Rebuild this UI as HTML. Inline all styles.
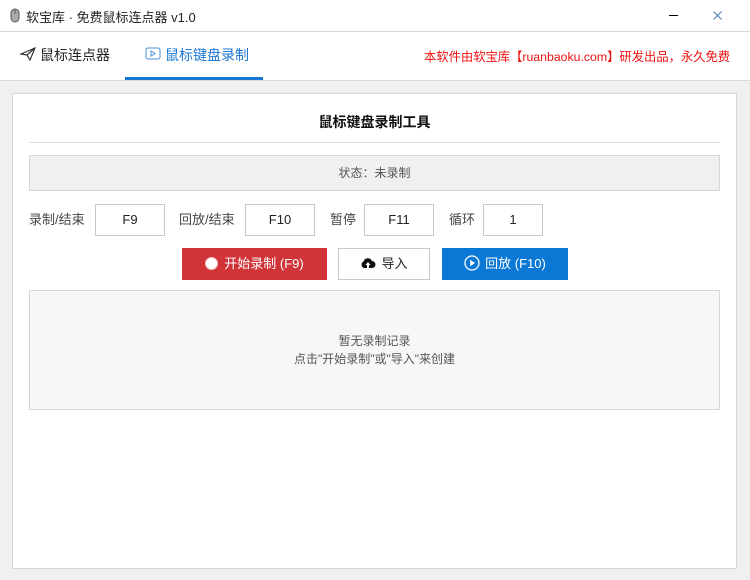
<!DOCTYPE html>
<html><head><meta charset="utf-8"><style>
*{box-sizing:border-box;margin:0;padding:0}
body{width:750px;height:580px;background:#f0f0f0;font-family:"Liberation Sans","Noto Sans CJK SC",sans-serif;font-size:13px;color:#333;position:relative;overflow:hidden}
.abs{position:absolute}
.top{left:0;top:0;width:750px;height:81px;background:#fff;border-bottom:1px solid #d8d8d8}
.tl{left:0;top:31px;width:750px;height:1px;background:#d8d8d8}
.panel{left:12px;top:93px;width:725px;height:476px;background:#fff;border:1px solid #d6d6d6}
.inp{height:32px;border:1px solid #c8c8c8;background:#fff;text-align:center;line-height:30px;font-size:13px;color:#222}
.lbl{font-size:13px;color:#444;line-height:32px;top:204px}
.btn{top:248px;height:32px;line-height:32px;text-align:center;font-size:13px}
</style></head><body>
<div class="abs top"></div>
<div class="abs tl"></div>
<svg class="abs" style="left:10px;top:8px" width="10" height="15"><rect x="1" y="1" width="8" height="13" rx="4" fill="#aaa" stroke="#555"/><line x1="5" y1="2" x2="5" y2="6" stroke="#555"/></svg>
<div class="abs" style="left:26px;top:7px;font-size:13px;color:#222">软宝库 · 免费鼠标连点器 v1.0</div>
<div class="abs" style="left:669px;top:15px;width:9px;height:1px;background:#000"></div>
<svg class="abs" style="left:713px;top:11px" width="9" height="9" viewBox="0 0 9 9"><path d="M0.5 0.5 L8.5 8.5 M8.5 0.5 L0.5 8.5" stroke="#4a7bb0" stroke-width="1"/></svg>
<svg class="abs" style="left:20px;top:47px" width="16" height="14" viewBox="0 0 16 14"><path d="M1 7 L15 1 L10 13 L7 8 Z M7 8 L15 1" fill="none" stroke="#333" stroke-width="1.2"/></svg>
<div class="abs" style="left:40px;top:45px;font-size:14px;color:#222">鼠标连点器</div>
<svg class="abs" style="left:145px;top:47px" width="16" height="13" viewBox="0 0 16 13"><rect x="1" y="1" width="14" height="11" rx="2" fill="none" stroke="#4a90d9"/><path d="M6 4 L10 6.5 L6 9Z" fill="none" stroke="#4a90d9"/></svg>
<div class="abs" style="left:165px;top:45px;font-size:14px;color:#1e78d2">鼠标键盘录制</div>
<div class="abs" style="left:125px;top:77px;width:138px;height:3px;background:#1677d2"></div>
<div class="abs" style="left:424px;top:47px;font-size:12.3px;color:#f01010;white-space:nowrap">本软件由软宝库【ruanbaoku.com】研发出品，永久免费</div>
<div class="abs panel"></div>
<div class="abs" style="left:29px;top:112px;width:691px;text-align:center;font-size:14px;font-weight:bold;color:#111">鼠标键盘录制工具</div>
<div class="abs" style="left:29px;top:142px;width:691px;height:1px;background:#ddd"></div>
<div class="abs" style="left:29px;top:155px;width:691px;height:36px;background:#f0f0f0;border:1px solid #d6d6d6;text-align:center;line-height:34px;font-size:12px;color:#555">状态：未录制</div>
<div class="abs lbl" style="left:29px">录制/结束</div>
<div class="abs inp" style="left:95px;top:204px;width:70px">F9</div>
<div class="abs lbl" style="left:179px">回放/结束</div>
<div class="abs inp" style="left:245px;top:204px;width:70px">F10</div>
<div class="abs lbl" style="left:330px">暂停</div>
<div class="abs inp" style="left:364px;top:204px;width:70px">F11</div>
<div class="abs lbl" style="left:449px">循环</div>
<div class="abs inp" style="left:483px;top:204px;width:60px">1</div>
<div class="abs btn" style="left:182px;width:145px;background:#d13438;color:#fff"><span style="display:inline-block;width:13px;height:13px;border-radius:50%;background:#fff;border:1px solid #f5c0c0;vertical-align:-2px;margin-right:6px"></span>开始录制 (F9)</div>
<div class="abs btn" style="left:338px;width:92px;background:#fff;border:1px solid #c8c8c8;color:#222;line-height:30px"><svg width="16" height="12" viewBox="0 0 16 12" style="vertical-align:-1px;margin-right:5px"><path d="M4 11 A3.5 3.5 0 0 1 3.5 4.5 A4.5 4.5 0 0 1 12 4 A3.5 3.5 0 0 1 12 11 Z" fill="#111"/><path d="M8 5 L5.5 8 H7 V11 H9 V8 H10.5 Z" fill="#fff"/></svg>导入</div>
<div class="abs btn" style="left:442px;width:126px;background:#0a78d4;color:#fff"><svg width="16" height="16" viewBox="0 0 16 16" style="vertical-align:-3px;margin-right:5px"><circle cx="8" cy="8" r="7" fill="none" stroke="#fff" stroke-width="1.3"/><path d="M6.2 4.8 L11 8 L6.2 11.2Z" fill="#fff"/></svg>回放 (F10)</div>
<div class="abs" style="left:29px;top:290px;width:691px;height:120px;background:#f7f7f7;border:1px solid #d6d6d6"></div>
<div class="abs" style="left:29px;top:332px;width:691px;text-align:center;font-size:12px;color:#555;line-height:18px">暂无录制记录<br>点击"开始录制"或"导入"来创建</div>
</body></html>
